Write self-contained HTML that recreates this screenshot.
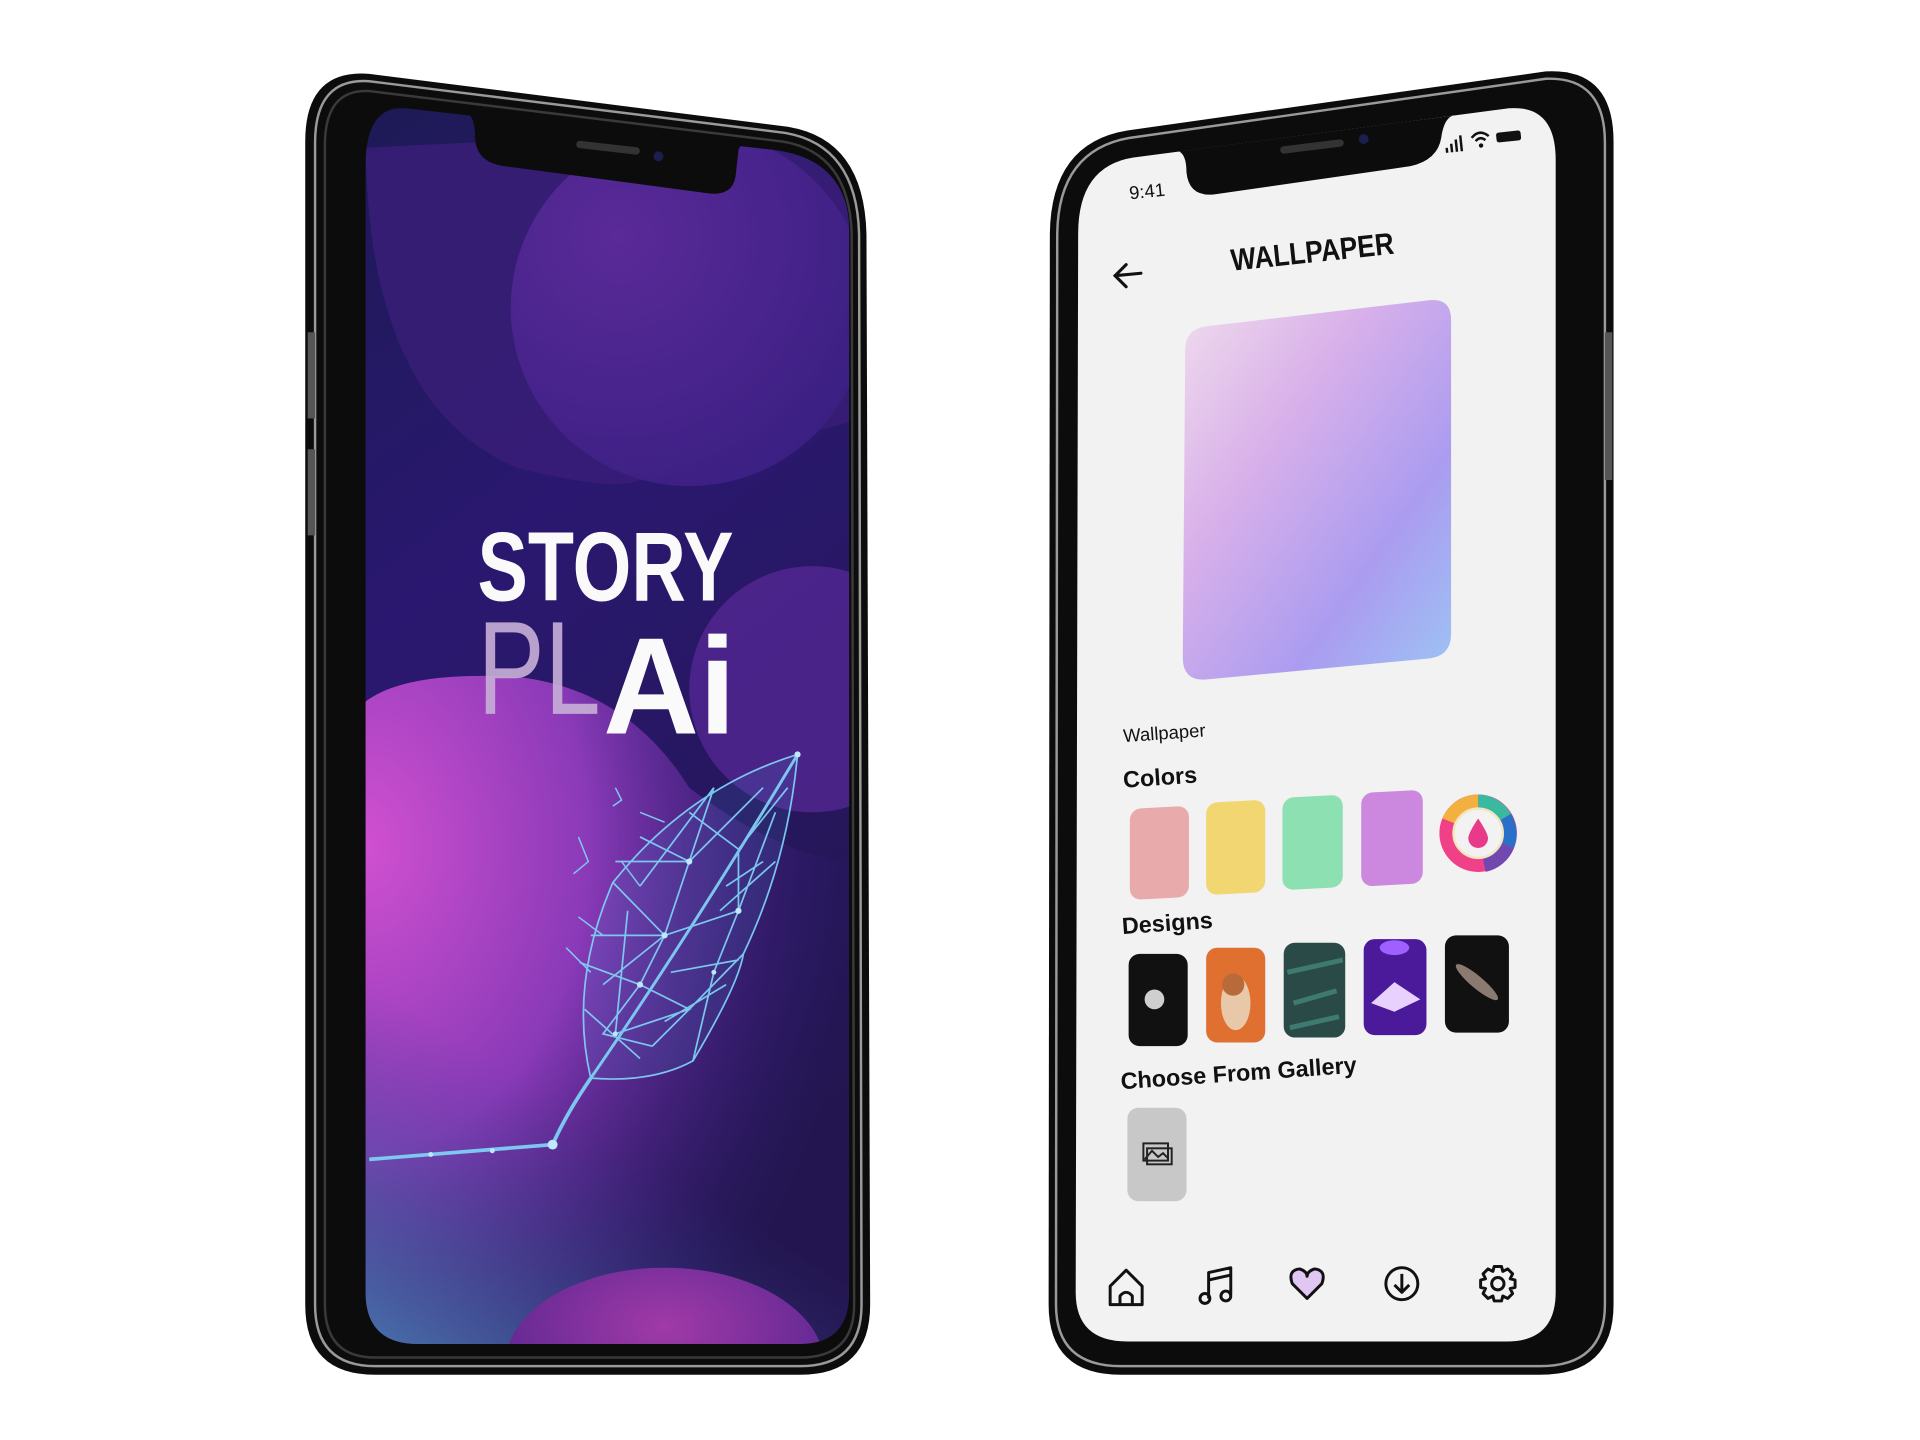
<!DOCTYPE html>
<html><head><meta charset="utf-8"><style>
html,body{margin:0;padding:0;background:#fff;width:1920px;height:1440px;overflow:hidden}
svg{display:block}
text{font-family:"Liberation Sans",sans-serif}
</style></head><body>
<svg width="1920" height="1440" viewBox="0 0 1560 1170" xmlns="http://www.w3.org/2000/svg">
<defs>
<linearGradient id="lbg" x1="0" y1="0" x2="0.3" y2="1">
<stop offset="0" stop-color="#1d1a55"/><stop offset="0.4" stop-color="#2a1870"/><stop offset="1" stop-color="#231650"/>
</linearGradient>
<radialGradient id="blobA" cx="0.3" cy="0.3" r="0.8">
<stop offset="0" stop-color="#5a2a98"/><stop offset="1" stop-color="#3a1f82"/>
</radialGradient>
<radialGradient id="blobB" cx="0" cy="0.25" r="1">
<stop offset="0" stop-color="#d050d0"/><stop offset="0.45" stop-color="#8a3ab8"/><stop offset="1" stop-color="#2e1a78" stop-opacity="0"/>
</radialGradient>
<linearGradient id="blobC" x1="0.8" y1="0" x2="0" y2="1">
<stop offset="0" stop-color="#3a3a90" stop-opacity="0"/><stop offset="0.42" stop-color="#3a3a90" stop-opacity="0"/><stop offset="0.7" stop-color="#4060a0" stop-opacity="0.4"/><stop offset="1" stop-color="#4a78b0" stop-opacity="0.95"/>
</linearGradient>
<radialGradient id="blobD" cx="0.5" cy="0.3" r="0.6">
<stop offset="0" stop-color="#a03aa8"/><stop offset="1" stop-color="#5a2690"/>
</radialGradient>
<linearGradient id="card" x1="0" y1="0" x2="1" y2="1">
<stop offset="0" stop-color="#f0dcec"/><stop offset="0.35" stop-color="#d8b0ea"/><stop offset="0.7" stop-color="#ab9cf0"/><stop offset="1" stop-color="#9cc4f4"/>
</linearGradient>
<clipPath id="lclip"><path d="M330,88 L630,122 Q688,130 690,185 L690,1050 Q690,1092 650,1092 L340,1092 Q297,1092 297,1050 L297,135 Q297,85 330,88 Z"/></clipPath>
</defs>

<!-- LEFT PHONE -->
<path d="M300,60 L640,103 Q702,113 704,190 L707,1060 Q707,1117 650,1117 L305,1117 Q248,1117 248,1060 L248,115 Q248,56 300,60 Z" fill="#0c0c0c"/>
<path d="M300,66 L638,108 Q696,118 698,190 L700,1060 Q700,1110 650,1110 L305,1110 Q256,1110 256,1060 L256,116 Q256,63 300,66 Z" fill="none" stroke="#9a9a9a" stroke-width="2"/>
<path d="M300,74 L636,115 Q690,124 692,190 L694,1060 Q694,1103 650,1103 L305,1103 Q264,1103 264,1060 L264,118 Q264,72 300,74 Z" fill="none" stroke="#3a3a3a" stroke-width="2"/>
<rect x="250" y="270" width="6" height="70" fill="#555"/>
<rect x="250" y="365" width="6" height="70" fill="#555"/>
<g clip-path="url(#lclip)">
<rect x="290" y="80" width="410" height="1020" fill="url(#lbg)"/>
<path d="M297,120 Q300,330 420,380 Q500,400 520,390 L700,340 L700,100 Z" fill="#3a1e78" opacity="0.8"/>
<circle cx="560" cy="250" r="145" fill="url(#blobA)"/>
<circle cx="660" cy="560" r="100" fill="#5a2a9a" opacity="0.7"/>
<path d="M297,570 Q330,545 420,550 Q510,560 560,640 Q640,700 700,700 L700,1100 L297,1100 Z" fill="url(#blobB)"/>
<rect x="297" y="780" width="410" height="320" fill="url(#blobC)"/>
<ellipse cx="540" cy="1110" rx="130" ry="80" fill="url(#blobD)"/>
</g>
<!-- notch -->
<path d="M380,92 Q386,96 386,112 Q387,132 410,135 L575,157 Q597,160 598,140 L600,122 Q601,117 607,118 Z" fill="#0c0c0c"/>
<rect x="468" y="117" width="52" height="6" rx="3" fill="#333" transform="rotate(6.5 494 120)"/>
<circle cx="535" cy="127" r="4" fill="#1a1f50"/>
<!-- title -->
<text x="388" y="488" font-size="80" font-weight="bold" fill="#fafafa" textLength="208" lengthAdjust="spacingAndGlyphs">STORY</text>
<text x="388" y="580" font-size="108" fill="#c8b0d8" opacity="0.9" textLength="100" lengthAdjust="spacingAndGlyphs">PL</text>
<text x="490" y="596" font-size="112" font-weight="bold" fill="#fafafa" textLength="108" lengthAdjust="spacingAndGlyphs">Ai</text>
<!-- leaf -->
<g stroke="#7fcff5" fill="none" stroke-width="1.4" opacity="0.95">
<path d="M480,876 Q462,800 498,717 Q560,640 648,613 Q640,700 604,775 Q600,800 563,862 Q530,880 480,876 Z" fill="#4a8ad8" fill-opacity="0.15"/>
<path d="M480,876 Q560,760 648,613" stroke-width="2.4"/>
<path d="M498,717 L540,760 L520,800 L560,820 L500,840 M520,680 L560,700 L540,760 L600,740 L580,790 L563,862 M560,660 L600,690 L600,740 L630,660 M471,782 L520,800 L490,840 L530,850 M580,640 L560,700 L610,650 M600,690 L640,640 M480,760 L540,760 M510,740 L500,840 M560,820 L604,775 M590,720 L620,700 M530,850 L560,820 M490,800 L540,760 M520,720 L580,640 M500,700 L560,700 L620,640 M540,830 L590,800 M585,740 L630,700 M475,820 L520,860 M545,790 L600,780"/>
<path d="M480,876 Q460,905 449,930 L300,942" stroke-width="3"/>
<path d="M500,640 L505,650 L498,655 M470,680 L478,700 L466,710 M505,700 L520,720 M520,660 L540,668 M470,745 L490,760 M460,770 L480,790" stroke-width="1.2"/>
</g>
<g fill="#bfe8ff">
<circle cx="648" cy="613" r="2.5"/><circle cx="540" cy="760" r="2.5"/><circle cx="600" cy="740" r="2.5"/><circle cx="520" cy="800" r="2.5"/><circle cx="560" cy="700" r="2.5"/><circle cx="449" cy="930" r="4"/><circle cx="350" cy="938" r="2"/><circle cx="400" cy="935" r="2"/><circle cx="580" cy="790" r="2"/><circle cx="500" cy="840" r="2"/>
</g>

<!-- RIGHT PHONE -->
<g transform="translate(-4 0)">
<path d="M1260,58 L920,106 Q858,116 857,190 L856,1060 Q856,1117 915,1117 L1255,1117 Q1315,1117 1315,1060 L1315,115 Q1315,55 1260,58 Z" fill="#0c0c0c"/>
<path d="M1260,64 L922,112 Q864,122 863,190 L862,1060 Q862,1110 915,1110 L1255,1110 Q1308,1110 1308,1060 L1308,116 Q1308,62 1260,64 Z" fill="none" stroke="#9a9a9a" stroke-width="2"/>
<rect x="1308" y="270" width="6" height="120" fill="#555"/>
<path d="M1230,88 L925,128 Q880,135 880,190 L878,1050 Q878,1090 920,1090 L1228,1090 Q1268,1090 1268,1050 L1268,130 Q1268,85 1230,88 Z" fill="#f2f2f2"/>
<path d="M962,123 Q968,126 968,140 Q970,160 990,158 L1150,135 Q1172,130 1175,112 Q1177,97 1184,94 Z" fill="#0c0c0c"/>
<rect x="1044" y="116" width="52" height="6" rx="3" fill="#333" transform="rotate(-7 1070 119)"/>
<circle cx="1112" cy="113" r="4" fill="#1a1f50"/>
<text x="922" y="162" font-size="15" fill="#111" transform="rotate(-6 922 162)">9:41</text>
<g fill="#111" transform="rotate(-6 1200 115)">
<rect x="1178" y="118" width="2" height="4"/><rect x="1182" y="115" width="2" height="7"/><rect x="1186" y="112" width="2" height="10"/><rect x="1190" y="109" width="2" height="13"/>
<path d="M1200,112 Q1207,105 1214,112 M1203,115 Q1207,111 1211,115" stroke="#111" stroke-width="2" fill="none"/><circle cx="1207" cy="119" r="1.8"/>
<rect x="1220" y="110" width="20" height="8" rx="2"/>
</g>
<path d="M919,215 L910,224 L919,233 M910,224 L931,222" stroke="#111" stroke-width="2.5" fill="none" stroke-linecap="round"/>
<text x="1005" y="220" font-size="25" font-weight="bold" fill="#111" transform="rotate(-6 1005 220)" textLength="133" lengthAdjust="spacingAndGlyphs">WALLPAPER</text>
<path d="M985,265 L1165,244 Q1183,242 1183,260 L1183,515 Q1183,533 1165,535 L985,552 Q965,554 965,534 L967,284 Q967,267 985,265 Z" fill="url(#card)"/>
<text x="917" y="603" font-size="15" fill="#111" transform="rotate(-4 917 603)">Wallpaper</text>
<text x="917" y="640" font-size="19" font-weight="bold" fill="#111" transform="rotate(-4 917 640)">Colors</text>
<rect x="922" y="656" width="48" height="74" rx="9" fill="#e8aaaa" transform="skewY(-3)" style="transform-box:fill-box;transform-origin:center"/>
<rect x="984" y="651" width="48" height="75" rx="9" fill="#f2d672" transform="skewY(-3)" style="transform-box:fill-box;transform-origin:center"/>
<rect x="1046" y="647" width="49" height="75" rx="9" fill="#8de0b2" transform="skewY(-3)" style="transform-box:fill-box;transform-origin:center"/>
<rect x="1110" y="643" width="50" height="76" rx="9" fill="#cc88de" transform="skewY(-3)" style="transform-box:fill-box;transform-origin:center"/>
<g transform="translate(1205 677)">
<circle r="26" fill="none" stroke="#f04088" stroke-width="11"/>
<path d="M0,-26 A26,26 0 0 1 22,-13" stroke="#3ab8a0" stroke-width="11" fill="none"/>
<path d="M22,-13 A26,26 0 0 1 24,10" stroke="#2a70c8" stroke-width="11" fill="none"/>
<path d="M24,10 A26,26 0 0 1 5,26" stroke="#7048b0" stroke-width="11" fill="none"/>
<path d="M-24,-10 A26,26 0 0 1 0,-26" stroke="#f2b040" stroke-width="11" fill="none"/>
<circle r="20" fill="none" stroke="#f2e6c0" stroke-width="2"/>
<path d="M0,-12 Q8,0 8,4 A8,8 0 0 1 -8,4 Q-8,0 0,-12 Z" fill="#e83a88"/>
</g>
<text x="916" y="759" font-size="19" font-weight="bold" fill="#111" transform="rotate(-4 916 759)">Designs</text>
<rect x="921" y="775" width="48" height="75" rx="9" fill="#111"/>
<circle cx="942" cy="812" r="8" fill="#cfcfcf"/>
<rect x="984" y="770" width="48" height="77" rx="9" fill="#e07030"/>
<ellipse cx="1008" cy="815" rx="12" ry="22" fill="#e8c8a8"/><circle cx="1006" cy="800" r="9" fill="#b86a3a"/>
<rect x="1047" y="766" width="50" height="77" rx="9" fill="#2a4a48"/>
<path d="M1050,790 L1095,780 M1055,815 L1090,805 M1052,835 L1092,826" stroke="#3f7a70" stroke-width="4"/>
<rect x="1112" y="763" width="51" height="78" rx="9" fill="#4a1a9a"/>
<path d="M1118,815 L1137,798 L1158,812 L1137,822 Z" fill="#e8d0ff"/><ellipse cx="1137" cy="770" rx="12" ry="6" fill="#a060ff"/>
<rect x="1178" y="760" width="52" height="79" rx="9" fill="#111"/>
<ellipse cx="1204" cy="798" rx="22" ry="5" fill="#8a7a70" transform="rotate(40 1204 798)"/>
<text x="915" y="885" font-size="19" font-weight="bold" fill="#111" transform="rotate(-4 915 885)">Choose From Gallery</text>
<rect x="920" y="900" width="48" height="76" rx="9" fill="#c8c8c8"/>
<g fill="none" stroke="#222" stroke-width="1.6">
<rect x="933" y="929" width="20" height="14"/><rect x="936" y="933" width="20" height="13"/>
<path d="M934,942 L940,935 L945,940 L949,937 L953,941"/>
</g>
<g fill="none" stroke="#111" stroke-width="2.4" stroke-linejoin="round">
<path d="M906,1060 L906,1045 L919,1032 L932,1045 L932,1060 Z M914,1060 L914,1053 Q919,1047 924,1053 L924,1060"/>
<path d="M986,1055 L986,1034 L1004,1030 L1004,1052 M986,1040 L1004,1036"/>
<circle cx="983" cy="1055" r="4"/><circle cx="1000" cy="1053" r="4"/>
<path d="M1066,1055 L1054,1043 Q1050,1032 1060,1031 Q1066,1033 1066,1037 Q1066,1033 1072,1031 Q1082,1032 1078,1043 Z" fill="#e0c6f2"/>
<circle cx="1143" cy="1043" r="13"/>
<path d="M1143,1035 L1143,1049 M1137,1044 L1143,1050 L1149,1044"/>
<circle cx="1221" cy="1043" r="5"/>
<path d="M1218,1029 L1224,1029 L1225,1033 L1229,1031 L1233,1035 L1231,1039 L1235,1040 L1235,1046 L1231,1047 L1233,1051 L1229,1055 L1225,1053 L1224,1057 L1218,1057 L1217,1053 L1213,1055 L1209,1051 L1211,1047 L1207,1046 L1207,1040 L1211,1039 L1209,1035 L1213,1031 L1217,1033 Z"/>
</g>
</g>
</svg>
</body></html>
